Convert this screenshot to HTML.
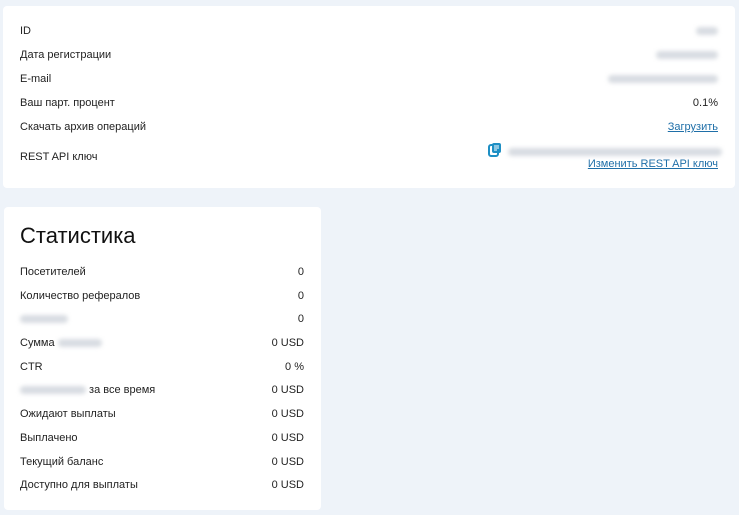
<!DOCTYPE html><html><head><meta charset="utf-8"><style>
body{margin:0;width:739px;height:515px;background:#eef3f9;font-family:"Liberation Sans",sans-serif;font-size:11px;color:#222;position:relative;overflow:hidden}
.card{position:absolute;background:#fff;border-radius:4px}
.r{position:absolute;left:17px;right:17px;height:14px;line-height:14px}
.r .v{position:absolute;right:0;top:0}
.b{display:inline-block;height:8px;background:#d8dce2;border-radius:4px;filter:blur(2px);vertical-align:middle}
a{color:#1f6fa8;text-decoration:underline}
</style></head><body>
<div class="card" style="left:3px;top:6px;width:732px;height:182px">
<div class="r" style="top:18px">ID<span class="v"><span class="b" style="width:22px"></span></span></div>
<div class="r" style="top:42px">Дата регистрации<span class="v"><span class="b" style="width:62px"></span></span></div>
<div class="r" style="top:66px">E-mail<span class="v"><span class="b" style="width:110px"></span></span></div>
<div class="r" style="top:90px">Ваш парт. процент<span class="v">0.1%</span></div>
<div class="r" style="top:114px">Скачать архив операций<span class="v"><a>Загрузить</a></span></div>
<div class="r" style="top:144px">REST API ключ</div>
<svg style="position:absolute;left:485px;top:136px" width="14" height="15" viewBox="0 0 14 15"><rect x="1" y="3" width="9" height="11" rx="2" fill="none" stroke="#1e8fc4" stroke-width="2"/><rect x="4" y="1" width="9" height="10" rx="2" fill="#1e8fc4"/><path d="M6 4h5M6 6h5M6 8h3" stroke="#fff" stroke-width="1"/></svg>
<div style="position:absolute;left:505px;top:140px;width:214px"><span class="b" style="width:214px"></span></div>
<div style="position:absolute;right:17px;top:152px"><a>Изменить REST API ключ</a></div>
</div>
<div class="card" style="left:4px;top:207px;width:317px;height:303px">
<div style="position:absolute;left:16px;top:16px;font-size:22px;color:#111">Статистика</div>
<div class="r" style="top:58px;left:16px;right:17px">Посетителей<span class="v">0</span></div>
<div class="r" style="top:82px;left:16px;right:17px">Количество рефералов<span class="v">0</span></div>
<div class="r" style="top:105px;left:16px;right:17px"><span class="b" style="width:48px"></span><span class="v">0</span></div>
<div class="r" style="top:129px;left:16px;right:17px">Сумма <span class="b" style="width:44px"></span><span class="v">0 USD</span></div>
<div class="r" style="top:153px;left:16px;right:17px">CTR<span class="v">0 %</span></div>
<div class="r" style="top:176px;left:16px;right:17px"><span class="b" style="width:66px"></span> за все время<span class="v">0 USD</span></div>
<div class="r" style="top:200px;left:16px;right:17px">Ожидают выплаты<span class="v">0 USD</span></div>
<div class="r" style="top:224px;left:16px;right:17px">Выплачено<span class="v">0 USD</span></div>
<div class="r" style="top:248px;left:16px;right:17px">Текущий баланс<span class="v">0 USD</span></div>
<div class="r" style="top:271px;left:16px;right:17px">Доступно для выплаты<span class="v">0 USD</span></div>
</div>
</body></html>
